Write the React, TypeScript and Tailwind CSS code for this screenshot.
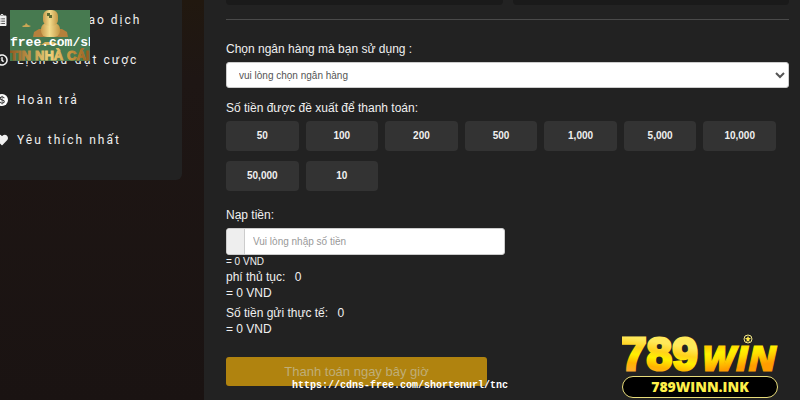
import React from 'react';
import { FaClipboardList, FaHeart, FaHistory } from 'react-icons/fa';
import { BsCurrencyDollar } from 'react-icons/bs';

const AMOUNTS = ['50', '100', '200', '500', '1,000', '5,000', '10,000', '50,000', '10'];

const DollarBadge: React.FC = () => (
  <span className="flex w-3 h-3 rounded-full bg-white text-[#222222] items-center justify-center">
    <BsCurrencyDollar className="w-[10px] h-[10px]" />
  </span>
);

const MENU = [
  { label: 'Lịch sử giao dịch', icon: <FaClipboardList className="w-3 h-3" /> },
  { label: 'Lịch sử đặt cược', icon: <FaHistory className="w-3 h-3" /> },
  { label: 'Hoàn trả', icon: <DollarBadge /> },
  { label: 'Yêu thích nhất', icon: <FaHeart className="w-3 h-3" /> },
];

const Sidebar: React.FC = () => (
  <nav className="w-[182px] shrink-0 self-start overflow-hidden rounded-br-md bg-[#222222] pb-5">
    {MENU.map(({ label, icon }) => (
      <a
        key={label}
        href="#"
        className="flex items-center gap-2 h-10 -ml-1 font-['Roboto','Liberation_Sans',sans-serif] text-xs tracking-[2px] text-[#f0f0f0] whitespace-nowrap"
      >
        <span className="w-[13px] shrink-0">{icon}</span>
        {label}
      </a>
    ))}
  </nav>
);

/* Coin stack stamp in the top left corner */
const CornerStamp: React.FC = () => (
  <svg className="absolute left-[10px] top-[10px]" width="80" height="51" viewBox="0 0 80 51">
    <defs>
      <linearGradient id="coin" x1="0" x2="1" y1="0" y2="0">
        <stop offset="0" stopColor="#c79a4c" />
        <stop offset="0.45" stopColor="#f3dc8c" />
        <stop offset="1" stopColor="#c39645" />
      </linearGradient>
      <linearGradient id="stampText" gradientUnits="userSpaceOnUse" x1="0" x2="80" y1="0" y2="0">
        <stop offset="0" stopColor="#8f5a22" />
        <stop offset="0.3" stopColor="#c9a050" />
        <stop offset="0.5" stopColor="#efd27c" />
        <stop offset="0.75" stopColor="#c9953f" />
        <stop offset="1" stopColor="#94591c" />
      </linearGradient>
    </defs>
    <rect width="80" height="51" fill="#477a50" />
    <path d="M23 27 l1 -5 l5 -3 h23 l5 3 l1 5 z" fill="#b5803c" />
    <rect x="31" y="13" width="19" height="14" rx="6" fill="url(#coin)" />
    <rect x="33" y="0" width="15" height="16" rx="6" fill="url(#coin)" />
    <path d="M37 3 h3 v2 h2 v3 h-3 v-2 h-2 z" fill="#5c6b35" />
    <path d="M12 16 l3 -1 l1 -2 l2 2 l3 1 l-2 1 h-6 z" fill="#c9a755" />
    <path d="M31 35 l4 -3 h9 l5 3 z" fill="#d9b45f" />
    <g fontSize="13" fontWeight="700" fill="url(#stampText)" stroke="url(#stampText)" className="font-['Liberation_Sans',sans-serif]">
      <text x="0" y="50">TIN</text>
      <text x="25" y="50">NHÀ</text>
      <text x="57" y="50">CÁI</text>
    </g>
    <text x="0" y="36" fontSize="13" fontWeight="700" fill="#ffffff" className="font-['Liberation_Mono',monospace]">
      free.com/sh
    </text>
  </svg>
);

const BrandLogo: React.FC = () => (
  <div className="absolute right-[22px] bottom-[2px] w-[156px]">
    <svg className="block" width="156" height="42" viewBox="0 0 156 42">
      <defs>
        <linearGradient id="digits" gradientUnits="userSpaceOnUse" x1="0" x2="6" y1="38" y2="3">
          <stop offset="0" stopColor="#ffa83a" />
          <stop offset="0.3" stopColor="#ffb400" />
          <stop offset="0.55" stopColor="#fff000" />
          <stop offset="0.75" stopColor="#ffd21a" />
          <stop offset="1" stopColor="#ffe95a" />
        </linearGradient>
        <linearGradient id="win" gradientUnits="userSpaceOnUse" x1="80" x2="84" y1="9" y2="38">
          <stop offset="0" stopColor="#ffb400" />
          <stop offset="0.4" stopColor="#fff200" />
          <stop offset="0.6" stopColor="#ffe000" />
          <stop offset="1" stopColor="#ff9d00" />
        </linearGradient>
      </defs>
      <text x="-1" y="36" fontSize="46" fontWeight="700" fill="url(#digits)" stroke="url(#digits)" strokeWidth="3" className="font-['Liberation_Sans',sans-serif]">
        789
      </text>
      <text x="80" y="37" fontSize="36" fontWeight="800" fontStyle="italic" fill="url(#win)" stroke="url(#win)" className="font-['Open_Sans','Liberation_Sans',sans-serif]">
        WIN
      </text>
      <circle cx="126" cy="5" r="5" fill="#222222" />
      <circle cx="126" cy="5" r="4" fill="#222222" stroke="#f4e98a" />
      <path d="M126 2 l1 2 h2 l-2 2 l1 2 l-2 -1 l-2 1 l1 -2 l-2 -2 h2 z" fill="#ffe94a" />
    </svg>
    <div className="h-[22px] rounded-full border border-[#e8dc7a] bg-black text-center font-['Open_Sans','Liberation_Sans',sans-serif] text-sm leading-5 font-extrabold text-[#fff04a]">
      789WINN.INK
    </div>
  </div>
);

const DepositForm: React.FC = () => (
  <main className="flex-1 min-w-0 bg-[#222222] pl-[22px] pr-[11px] pb-[14px] text-xs leading-4 text-[#f0f0f0]">
    <div className="grid grid-cols-2 gap-[10px]">
      <div className="h-[5px] rounded-b bg-[#1a1a1a]" />
      <div className="h-[5px] rounded-b bg-[#1a1a1a]" />
    </div>
    <hr className="mt-[14px] border-[#4a4a4a]" />

    <label htmlFor="bank" className="block mt-[21px]">
      Chọn ngân hàng mà bạn sử dụng :
    </label>
    <select
      id="bank"
      className="block mt-[5px] w-full h-[26px] rounded-[3px] border border-[#cccccc] bg-white pl-2 text-[10px] text-[#555555]"
    >
      <option>vui lòng chọn ngân hàng</option>
    </select>

    <p className="mt-3">Số tiền được đề xuất để thanh toán:</p>
    <div className="grid grid-cols-7 gap-x-[7px] gap-y-[10px] mt-[5px] pr-[13px]">
      {AMOUNTS.map((amount) => (
        <button key={amount} type="button" className="h-[30px] rounded bg-[#333333] text-[10px] font-bold">
          {amount}
        </button>
      ))}
    </div>

    <label htmlFor="amount" className="block mt-4">
      Nạp tiền:
    </label>
    <div className="flex mt-[5px] w-[279px] h-[27px] overflow-hidden rounded-[3px] border border-[#cccccc] bg-white">
      <span className="w-[18px] shrink-0 border-r border-[#cccccc] bg-[#eeeeee]" />
      <input
        id="amount"
        type="text"
        placeholder="Vui lòng nhập số tiền"
        className="flex-1 min-w-0 px-2 text-[10px] text-[#555555] placeholder:text-[#999999]"
      />
    </div>

    <p className="text-[10px] leading-[14px]">= 0 VND</p>
    <p>
      phí thủ tục: <span className="ml-1.5">0</span>
    </p>
    <p>= 0 VND</p>
    <p className="mt-1">
      Số tiền gửi thực tế: <span className="ml-1.5">0</span>
    </p>
    <p>= 0 VND</p>

    <button
      type="button"
      className="block mt-5 w-[261px] h-[29px] rounded-[3px] bg-[#b0830f] text-[13px] text-[#bfae78]"
    >
      Thanh toán ngay bây giờ
    </button>
  </main>
);

const App: React.FC = () => {
  return (
    <div className="relative flex gap-[22px] min-h-screen overflow-hidden bg-linear-to-b from-[#21180f] via-[#1e1614] via-20% to-[#1a1312] font-['Liberation_Sans',Arial,sans-serif]">
      <Sidebar />
      <DepositForm />
      <CornerStamp />
      <BrandLogo />
      <p className="absolute inset-x-0 bottom-[7px] text-center font-['Liberation_Mono',monospace] text-[10px] leading-[14px] font-bold text-white">
        https://cdns-free.com/shortenurl/tnc
      </p>
    </div>
  );
};

export default App;
